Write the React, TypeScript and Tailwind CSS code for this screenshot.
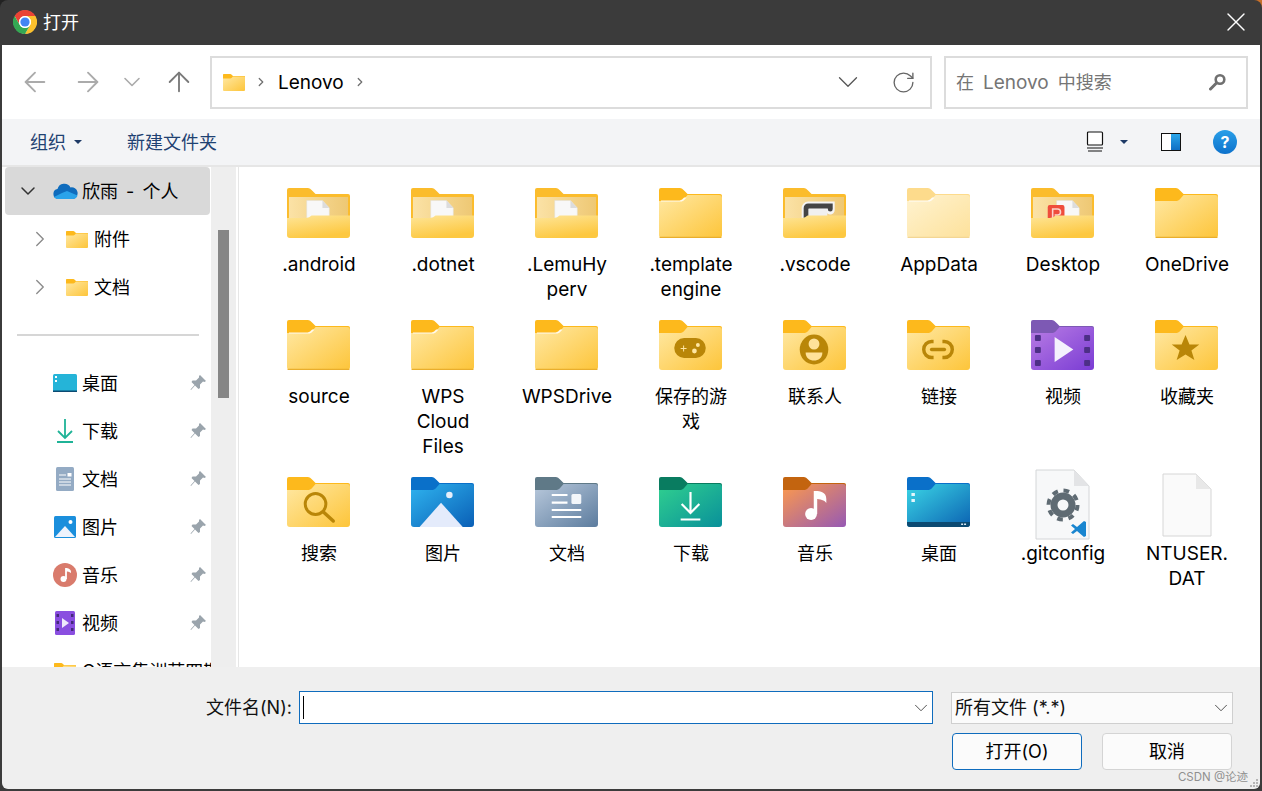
import { useId, type ReactNode } from "react";
import { ArrowLeft, ArrowRight, ArrowUp, ChevronDown, ChevronRight, RotateCw, X } from "lucide-react";

const TAB = "M2 0H21C23 0 24 1 26 3L29 6H62A2 2 0 0 1 64 8V16H0V2A2 2 0 0 1 2 0Z";
const FRONT = "M0 13H21C23 13 24 12.4 25.5 11L29 7H61A3 3 0 0 1 64 10V47A3 3 0 0 1 61 50H3A3 3 0 0 1 0 47Z";

function ChromeLogo() {
  const red = "M1.6 6A12 12 0 0 1 22.4 6H12A6 6 0 0 0 6.8 15Z";
  return (
    <svg width="24" height="24" viewBox="0 0 24 24">
      <circle cx="12" cy="12" r="11.5" fill="#fff" />
      <path d={red} fill="#ea4335" />
      <path d={red} fill="#fbc02d" transform="rotate(120 12 12)" />
      <path d={red} fill="#34a853" transform="rotate(240 12 12)" />
      <circle cx="12" cy="12" r="6" fill="#fff" />
      <circle cx="12" cy="12" r="4.6" fill="#4285f4" />
    </svg>
  );
}

function Folder({
  tab = "#fdb91c",
  from = "#ffe8a3",
  to = "#fdc53a",
  size = 63,
  faded,
  children,
}: {
  tab?: string;
  from?: string;
  to?: string;
  size?: number;
  faded?: boolean;
  children?: ReactNode;
}) {
  const id = useId();
  return (
    <svg
      width={size}
      height={Math.round((size * 50) / 63)}
      viewBox="0 0 64 50"
      preserveAspectRatio="none"
      opacity={faded ? 0.5 : 1}
    >
      <defs>
        <linearGradient id={id} x1="0" y1="0" x2="1" y2="1">
          <stop offset="0" stopColor={from} />
          <stop offset="1" stopColor={to} />
        </linearGradient>
      </defs>
      <path d={TAB} fill={tab} />
      <path d={FRONT} fill={`url(#${id})`} />
      {children}
    </svg>
  );
}

function PlainFolder({ paper, faded }: { paper?: boolean; faded?: boolean }) {
  return (
    <Folder faded={faded}>
      {paper && <path d="M2 12.500H21C23 12 24 11 25.500 9.500H28L25 12.500 23 13.500H2Z" fill="#fff" opacity={0.9} />}
      <rect x="0.500" y="48.800" width="63" height="1.200" rx="0.600" fill="#e9ae2c" />
    </Folder>
  );
}

function OpenFolder({ children }: { children?: ReactNode }) {
  const id = useId();
  return (
    <svg width="63" height="50" viewBox="0 0 64 50" preserveAspectRatio="none">
      <defs>
        <linearGradient id={`${id}a`} x1="0" y1="0" x2="1" y2="0">
          <stop offset="0" stopColor="#fbe2a6" />
          <stop offset="1" stopColor="#eec874" />
        </linearGradient>
        <linearGradient id={`${id}b`} x1="0" y1="0" x2="0.4" y2="1">
          <stop offset="0" stopColor="#fee597" />
          <stop offset="1" stopColor="#fdc840" />
        </linearGradient>
      </defs>
      <path d="M2 0H21C23 0 24 1 26 3L29 6H62A2 2 0 0 1 64 8V30H0V2A2 2 0 0 1 2 0Z" fill="#fbbc2c" />
      <rect x="2" y="9" width="60" height="22" fill={`url(#${id}a)`} />
      {children}
      <path
        d="M0 30H19C21 30 22 29.600 23.500 28.600L25 27.600H64V47A3 3 0 0 1 61 50H3A3 3 0 0 1 0 47Z"
        fill={`url(#${id}b)`}
      />
    </svg>
  );
}

const Paper = ({ x = 20 }: { x?: number }) => (
  <>
    <path d={`M${x} 12.500H${x + 16}L${x + 23} 20V32H${x}Z`} fill="#f8f8f8" stroke="#ddd" strokeWidth="0.400" />
    <path d={`M${x + 16} 12.500V20H${x + 23}Z`} fill="#dcdcdc" />
  </>
);

const GOLD = "#b98608";

const FILES: { name: string; icon: ReactNode }[] = [
  { name: ".android", icon: <OpenFolder><Paper /></OpenFolder> },
  { name: ".dotnet", icon: <OpenFolder><Paper /></OpenFolder> },
  { name: ".LemuHy\nperv", icon: <OpenFolder><Paper /></OpenFolder> },
  { name: ".template\nengine", icon: <PlainFolder paper /> },
  {
    name: ".vscode",
    icon: (
      <OpenFolder>
        <path d="M23.500 32V20A2 2 0 0 1 25.500 18H48V22" fill="none" stroke="#f4f4f4" strokeWidth="9" strokeLinecap="round" />
        <path d="M23.500 32V20A2 2 0 0 1 25.500 18H48V21" fill="none" stroke="#454545" strokeWidth="5" strokeLinecap="round" />
        <rect x="26" y="21" width="19" height="11" fill="#f0f0f0" />
      </OpenFolder>
    ),
  },
  { name: "AppData", icon: <PlainFolder paper faded /> },
  {
    name: "Desktop",
    icon: (
      <OpenFolder>
        <Paper x={26} />
        <rect x="17" y="17" width="17" height="16" rx="2" fill="#ef4d3c" />
        <path d="M22 31V21H27A3 3 0 0 1 27 27H24" fill="none" stroke="#fbd3cc" strokeWidth="1.600" />
      </OpenFolder>
    ),
  },
  { name: "OneDrive", icon: <PlainFolder /> },
  { name: "source", icon: <PlainFolder paper /> },
  { name: "WPS\nCloud\nFiles", icon: <PlainFolder paper /> },
  { name: "WPSDrive", icon: <PlainFolder paper /> },
  {
    name: "保存的游\n戏",
    icon: (
      <Folder>
        <rect x="15.500" y="18" width="32" height="20" rx="10" fill={GOLD} />
        <path d="M22 28.500H28M25 25.500V31.500" stroke="#ffe7a3" strokeWidth="1" />
        <circle cx="39.500" cy="25" r="2" fill="#ffe7a3" />
        <circle cx="36" cy="31" r="2.400" fill="#ffe7a3" />
      </Folder>
    ),
  },
  {
    name: "联系人",
    icon: (
      <Folder>
        <ellipse cx="31.500" cy="29.500" rx="14.500" ry="15" fill={GOLD} />
        <circle cx="31.500" cy="24" r="5.500" fill="#ffe29a" />
        <path d="M23 32.500H40C40 38 36 40.500 31.500 40.500S23 38 23 32.500Z" fill="#ffe29a" />
      </Folder>
    ),
  },
  {
    name: "链接",
    icon: (
      <Folder>
        <path
          d="M27 21.500H25A8 8 0 0 0 25 37.500H27M36 21.500H38A8 8 0 0 1 38 37.500H36"
          fill="none"
          stroke={GOLD}
          strokeWidth="3.500"
        />
        <path d="M25 29.500H38" stroke={GOLD} strokeWidth="3.500" strokeLinecap="round" />
      </Folder>
    ),
  },
  {
    name: "视频",
    icon: (
      <Folder tab="#7d59b4" from="#b87ce4" to="#7a3cd4">
        {[15, 27, 40].map((y) => (
          <g key={y}>
            <rect x="4" y={y} width="6" height="6" rx="1" fill="#4d2f86" />
            <rect x="54" y={y} width="6" height="6" rx="1" fill="#4d2f86" />
          </g>
        ))}
        <path d="M24 17L43 29.500L24 42Z" fill="#f4f0fd" />
      </Folder>
    ),
  },
  {
    name: "收藏夹",
    icon: (
      <Folder>
        <path d="M31 15L35 24.500H45L37 30.500L40 40L31 34.500L22 40L25 30.500L17 24.500H27Z" fill={GOLD} />
      </Folder>
    ),
  },
  {
    name: "搜索",
    icon: (
      <Folder>
        <circle cx="29" cy="27" r="10.500" fill="none" stroke={GOLD} strokeWidth="3" />
        <path d="M37 35L47 44" stroke={GOLD} strokeWidth="3.500" strokeLinecap="round" />
      </Folder>
    ),
  },
  {
    name: "图片",
    icon: (
      <Folder tab="#0a70c9" from="#2fb4ef" to="#0a5fb6">
        <circle cx="39" cy="18" r="3.300" fill="#e6eefa" />
        <path d="M8.700 50L30.500 25.700L52.600 50Z" fill="#e4ebfb" />
      </Folder>
    ),
  },
  {
    name: "文档",
    icon: (
      <Folder tab="#5f7987" from="#b9c9dc" to="#5c7c9e">
        <path d="M17 18H33M17 25.700H33M17 33H47M17 40H47" stroke="#fff" strokeWidth="2.200" />
        <rect x="37" y="17" width="10" height="10" rx="1.500" fill="#f3f6fa" />
      </Folder>
    ),
  },
  {
    name: "下载",
    icon: (
      <Folder tab="#097c60" from="#30d08f" to="#09909a">
        <path d="M32 15V36M23 27L32 36L41 27M22 42.500H42" fill="none" stroke="#fff" strokeWidth="2.200" />
      </Folder>
    ),
  },
  {
    name: "音乐",
    icon: (
      <Folder tab="#c3640f" from="#fd9a4c" to="#9659b4">
        <path d="M33 14V37" stroke="#fff" strokeWidth="3.500" />
        <path d="M33 14C38 14 44 15 44 22V26C42 23 38 22 33 22Z" fill="#fff" />
        <circle cx="28.500" cy="37" r="6" fill="#fff" />
      </Folder>
    ),
  },
  {
    name: "桌面",
    icon: (
      <Folder tab="#0a70c9" from="#3bd6e6" to="#0b62b2">
        <rect x="4.500" y="16" width="3.500" height="3" fill="#e6f6fb" />
        <rect x="4.500" y="22" width="3.500" height="3" fill="#e6f6fb" />
        <path d="M0 45H64V47A3 3 0 0 1 61 50H3A3 3 0 0 1 0 47Z" fill="#0c4a72" />
        <rect x="55" y="46.500" width="2" height="1.500" fill="#dbeaf5" />
        <rect x="58" y="46.500" width="2" height="1.500" fill="#dbeaf5" />
      </Folder>
    ),
  },
  {
    name: ".gitconfig",
    icon: (
      <svg width="56" height="72" viewBox="0 0 56 72" className="-mt-2 ml-px shrink-0">
        <path d="M1 1H39L54 17V70H1Z" fill="#f7f8f9" stroke="#d4d6d8" />
        <path d="M39 1V17H54Z" fill="#e3e4e6" />
        <circle cx="28" cy="36" r="9" fill="none" stroke="#5f6b73" strokeWidth="7" />
        <circle cx="28" cy="36" r="14.500" fill="none" stroke="#5f6b73" strokeWidth="4" strokeDasharray="5.700 5.700" />
        <path d="M49 52L42 58L38 55L36 56.500L40 60L36 63.500L38 65L42 62L49 68L51 67V53Z" fill="#1a86d0" />
      </svg>
    ),
  },
  {
    name: "NTUSER.\nDAT",
    icon: (
      <svg width="50" height="64" viewBox="0 0 50 64" className="-mt-1 ml-px shrink-0">
        <path d="M1 1H34L49 16V63H1Z" fill="#fafafa" stroke="#d6d6d6" />
        <path d="M34 1V16H49Z" fill="#e8e8e8" />
      </svg>
    ),
  },
];

function Pin() {
  return (
    <svg width="16" height="16" viewBox="0 0 16 16" className="shrink-0">
      <path d="M10 0L16 6L14.500 7L13 6.500L10 9.500L10 13L8.500 14L5 10.500L1 15L0.500 14.500L4.500 10L1.500 7L2.500 5.500L6 5.500L9 2.500L9 1Z" fill="#9aa4ac" />
    </svg>
  );
}

const QUICK: { name: string; icon: ReactNode }[] = [
  {
    name: "桌面",
    icon: (
      <svg width="24" height="18" viewBox="0 0 24 18">
        <rect width="24" height="18" rx="1.500" fill="#25b4d8" />
        <rect y="16.500" width="24" height="1.500" fill="#0c4a72" />
        <rect x="2" y="2" width="2" height="2" fill="#fff" />
        <rect x="2" y="6" width="2" height="2" fill="#fff" />
      </svg>
    ),
  },
  {
    name: "下载",
    icon: (
      <svg width="18" height="24" viewBox="0 0 18 24">
        <path d="M9 0V19M2 12L9 19L16 12M1 23H17" fill="none" stroke="#1fb397" strokeWidth="1.800" />
      </svg>
    ),
  },
  {
    name: "文档",
    icon: (
      <svg width="18" height="24" viewBox="0 0 18 24">
        <rect width="18" height="24" rx="1.500" fill="#94abc4" />
        <path d="M3 8H10M3 12H15M3 15H15M3 18H15" stroke="#fff" strokeWidth="1" />
        <rect x="11.500" y="6" width="4" height="3.500" fill="#fff" />
      </svg>
    ),
  },
  {
    name: "图片",
    icon: (
      <svg width="22" height="22" viewBox="0 0 22 22">
        <rect width="22" height="22" rx="1.500" fill="#1b8fdc" />
        <circle cx="16.500" cy="6" r="2" fill="#fff" />
        <path d="M1 21L11 10L21 21Z" fill="#eef3fc" />
      </svg>
    ),
  },
  {
    name: "音乐",
    icon: (
      <svg width="24" height="24" viewBox="0 0 24 24">
        <circle cx="12" cy="12" r="12" fill="#d97b6c" />
        <path d="M13 5V16" stroke="#fff" strokeWidth="1.800" />
        <path d="M13 5C15 5 18 6 18 9V10C16 8.500 15 8.500 13 8.500Z" fill="#fff" />
        <circle cx="10.500" cy="16" r="3" fill="#fff" />
      </svg>
    ),
  },
  {
    name: "视频",
    icon: (
      <svg width="20" height="24" viewBox="0 0 20 24">
        <rect width="20" height="24" rx="1.500" fill="#8a4ee0" />
        {[3, 10, 17].map((y) => (
          <g key={y}>
            <rect x="1.500" y={y} width="2.500" height="3" fill="#45297c" />
            <rect x="16" y={y} width="2.500" height="3" fill="#45297c" />
          </g>
        ))}
        <path d="M7 7L14 12L7 17Z" fill="#eee8fb" />
      </svg>
    ),
  },
];

function Sidebar() {
  return (
    <div className="w-[209px] shrink-0 overflow-hidden bg-white">
      <div className="ml-[3px] flex h-[48px] w-[205px] items-center rounded-sm bg-[#d9d9d9]">
        <ChevronDown size={24} strokeWidth={1.5} className="ml-[11px] shrink-0 text-[#333]" />
        <svg width="25" height="16" viewBox="0 0 25 16" className="ml-[13px] shrink-0">
          <path d="M5 16A5 5 0 0 1 4.500 6.100A7 7 0 0 1 17.500 4.500A5.500 5.500 0 0 1 20 16Z" fill="#0f6cbd" />
          <path d="M5 16C4 16 2 15.500 1 14L9 10L14 8L24.500 12.500C24 14.500 22 16 20 16Z" fill="#2aa3ea" />
        </svg>
        <span className="ml-[4px] whitespace-nowrap text-black [word-spacing:3px]">欣雨 - 个人</span>
      </div>
      {["附件", "文档"].map((name) => (
        <div key={name} className="flex h-[48px] items-center">
          <ChevronRight size={26} strokeWidth={1.3} className="ml-[25px] shrink-0 text-[#8c8c8c]" />
          <div className="ml-[13px] flex">
            <Folder size={22} />
          </div>
          <span className="ml-[6px] text-black">{name}</span>
        </div>
      ))}
      <div className="mx-[15px] mt-[23px] h-[2px] w-[182px] bg-[#d6d6d6]" />
      <div className="mt-[23px]">
        {QUICK.map((item) => (
          <div key={item.name} className="flex h-[48px] items-center">
            <div className="ml-[51px] flex w-[24px] justify-center">{item.icon}</div>
            <span className="ml-[5px] flex-1 text-black">{item.name}</span>
            <div className="mr-[5px]"><Pin /></div>
          </div>
        ))}
        <div className="flex h-[48px] items-center">
          <div className="ml-[52px] flex w-[22px]">
            <Folder size={22} />
          </div>
          <span className="ml-[6px] whitespace-nowrap text-black">C语言集训营四期</span>
        </div>
      </div>
    </div>
  );
}

export default function App() {
  return (
    <div className="relative h-[791px] w-[1262px] overflow-hidden bg-[#222222]">
      <div className="absolute right-0 top-0 h-[8px] w-[8px] bg-[#c8702a]" />
      <div className="relative flex h-full flex-col overflow-hidden rounded-t-[8px] bg-[#3b3b3b] font-['Inter','Noto_Sans_CJK_SC',sans-serif] text-[18px] leading-[25px]">
        <div className="flex h-[45px] shrink-0 items-center pb-px pl-[13px] pr-[10px] text-white">
          <ChromeLogo />
          <span className="ml-[6px] flex-1">打开</span>
          <X size={32} strokeWidth={1} />
        </div>

        <div className="mx-[2px] mb-[2px] flex min-h-0 flex-1 flex-col">
          <div className="flex h-[74px] shrink-0 items-center bg-white">
            <ArrowLeft size={32} strokeWidth={1.4} className="ml-[17px] shrink-0 text-[#ababab]" />
            <ArrowRight size={32} strokeWidth={1.4} className="ml-[21px] shrink-0 text-[#ababab]" />
            <ChevronDown size={28} strokeWidth={1.4} className="ml-[14px] shrink-0 text-[#ababab]" />
            <ArrowUp size={32} strokeWidth={1.4} className="ml-[17px] shrink-0 text-[#7a7a7a]" />
            <div className="ml-[15px] flex h-[53px] w-[722px] items-center border-2 border-[#dcdcdc] bg-white">
              <div className="ml-[11px] flex"><Folder size={22} /></div>
              <ChevronRight size={14} strokeWidth={2.2} className="ml-[9px] text-[#707070]" />
              <span className="ml-[10px] text-[19px] text-black">Lenovo</span>
              <ChevronRight size={14} strokeWidth={2.2} className="ml-[9px] text-[#707070]" />
              <ChevronDown size={34} strokeWidth={0.9} className="ml-auto text-[#555]" />
              <RotateCw size={25} strokeWidth={1.3} className="ml-[26px] mr-[14px] text-[#666]" />
            </div>
            <div className="ml-[12px] flex h-[53px] w-[304px] items-center border-2 border-[#dcdcdc] bg-white pl-[10px] pr-[20px]">
              <span className="flex-1 text-[#757575]">
                在<span className="mx-[9px] text-[19px]">Lenovo</span>中搜索
              </span>
              <svg width="17" height="18" viewBox="0 0 17 18">
                <circle cx="11" cy="6.500" r="4.300" fill="none" stroke="#707070" strokeWidth="2.600" />
                <path d="M7.500 10L1.500 16" stroke="#707070" strokeWidth="3" strokeLinecap="round" />
              </svg>
            </div>
          </div>

          <div className="flex h-[48px] shrink-0 items-center border-b-2 border-[#e6e6e6] bg-[#f3f4f6] text-[#1f4272]">
            <span className="ml-[28px]">组织</span>
            <span className="ml-[8px] h-0 w-0 border-x-[4px] border-t-[4px] border-x-transparent border-t-[#1e3a66]" />
            <span className="ml-[45px]">新建文件夹</span>
            <svg width="20" height="22" viewBox="0 0 20 22" className="ml-auto">
              <rect x="2.500" y="1" width="15" height="13" rx="1" fill="#fff" stroke="#111" strokeWidth="1.200" />
              <path d="M2 17H18M3 20H17" stroke="#111" strokeWidth="1" />
            </svg>
            <span className="ml-[15px] h-0 w-0 border-x-[4.500px] border-t-[4.500px] border-x-transparent border-t-[#1e3a66]" />
            <div className="ml-[33px] flex h-[18px] w-[20px] border-[1.5px] border-[#111] bg-white">
              <div className="ml-auto h-full w-[9px] bg-gradient-to-b from-[#2aa6ea] to-[#0f6fc4]" />
            </div>
            <div className="ml-[32px] mr-[23px] flex h-[24px] w-[24px] items-center justify-center rounded-full bg-gradient-to-b from-[#2a9fe8] to-[#0d72cc] text-[16px] font-bold text-white">
              ?
            </div>
          </div>

          <div className="flex min-h-0 flex-1 bg-white">
            <Sidebar />
            <div className="relative flex w-[25px] shrink-0 justify-center bg-[#eeeeee]">
              <div className="absolute left-[7px] top-[63px] h-[168px] w-[11px] bg-[#868686]" />
            </div>
            <div className="ml-[2px] w-px shrink-0 bg-[#e6e6e6]" />
            <div className="min-w-0 flex-1 overflow-hidden pl-[18px] pt-[21px]">
              <div className="grid grid-cols-[repeat(8,124px)] grid-rows-[132px_157px_130px]">
                {FILES.map((f) => (
                  <div key={f.name} className="flex flex-col items-center">
                    <div className="mr-px flex h-[50px] w-[63px] items-start justify-center">{f.icon}</div>
                    <div className={/[A-Za-z]/.test(f.name) ? "mt-[14px] whitespace-pre-line text-center text-[19px] text-black" : "mt-[14px] whitespace-pre-line text-center text-black"}>
                      {f.name}
                    </div>
                  </div>
                ))}
              </div>
            </div>
          </div>

          <div className="relative h-[122px] shrink-0 rounded-b-[6px] bg-[#efefef] pt-[24px]">
            <div className="flex items-center">
              <span className="ml-[204px] w-[93px] whitespace-nowrap text-[#111]">文件名(N):</span>
              <div className="flex h-[33px] w-[634px] items-center border border-[#0f6cbd] bg-white">
                <div className="ml-[3px] h-[23px] w-px bg-black" />
                <ChevronDown size={22} strokeWidth={1} className="ml-auto text-[#444]" />
              </div>
              <div className="ml-[18px] flex h-[32px] w-[282px] items-center border border-[#cfcfcf] bg-[#fbfbfb] pl-[3px] text-[#111]">
                <span className="flex-1">所有文件 (*.*)</span>
                <ChevronDown size={22} strokeWidth={1} className="text-[#444]" />
              </div>
            </div>
            <div className="ml-[950px] mt-[9px] flex gap-[20px] text-black">
              <div className="flex h-[37px] w-[130px] items-center justify-center rounded-[4px] border border-[#0f6cbd] bg-[#fbfbfb]">打开(O)</div>
              <div className="flex h-[37px] w-[130px] items-center justify-center rounded-[4px] border border-[#d4d4d4] bg-[#fbfbfb]">取消</div>
            </div>
            <span className="absolute bottom-[5px] right-[12px] text-[11.5px] leading-[14px] text-[#8f8f8f]">CSDN @论迹</span>
            <div className="absolute bottom-[2px] right-[2px] grid grid-cols-3 gap-[1px]">
              {[0, 1, 2, 3, 4, 5, 6, 7, 8].map((i) => (
                <span key={i} className={i === 0 || i === 1 || i === 3 ? "h-[2px] w-[2px]" : "h-[2px] w-[2px] bg-[#b5b5b5]"} />
              ))}
            </div>
          </div>
        </div>
      </div>
    </div>
  );
}
